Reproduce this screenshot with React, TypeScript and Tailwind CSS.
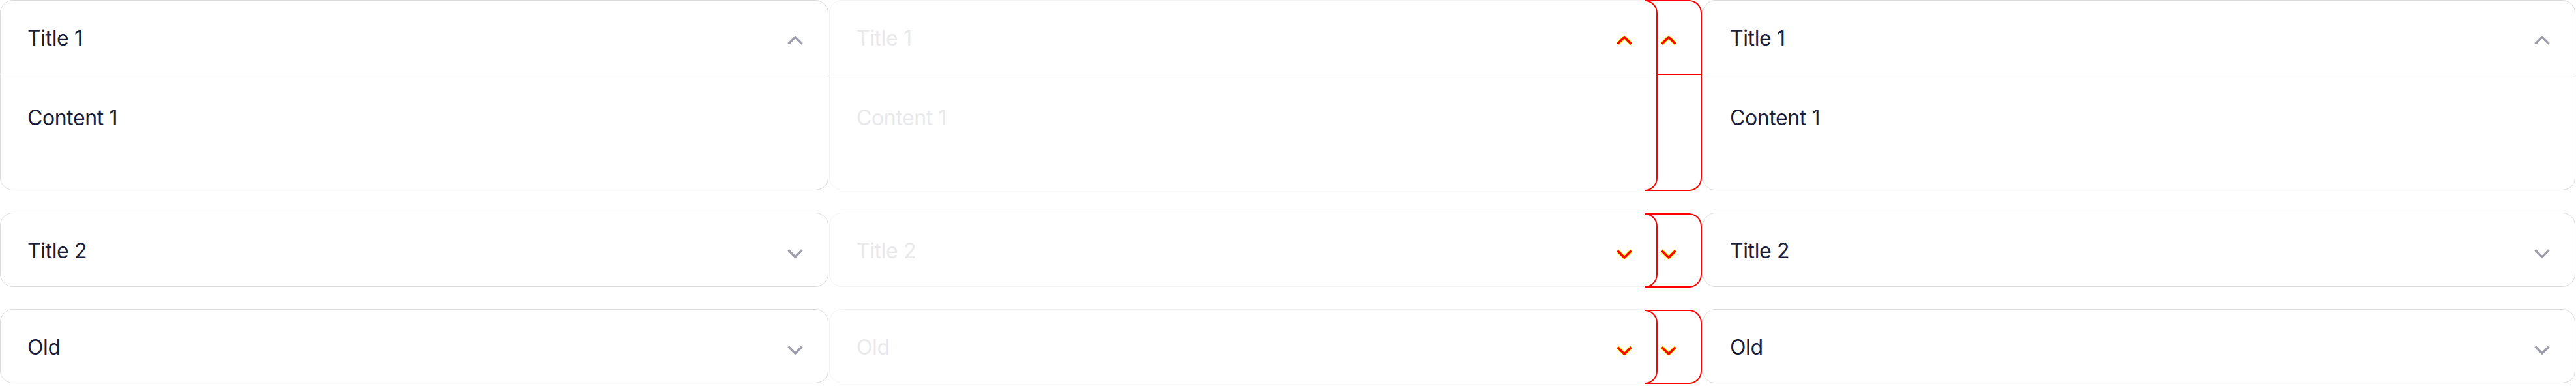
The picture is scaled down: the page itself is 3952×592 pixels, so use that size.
import React from "react";

function Chevron({ up, color, under }: { up: boolean; color: string; under?: string }) {
  const pts = up ? "2.5,12.5 13,2 23.5,12.5" : "2.5,2.5 13,13 23.5,2.5";
  return (
    <svg width="26" height="15" viewBox="0 0 26 15" className="shrink-0">
      {under ? <polyline points={pts} fill="none" stroke={under} strokeWidth={5.5} /> : null}
      <polyline points={pts} fill="none" stroke={color} strokeWidth={3.5} />
    </svg>
  );
}

type CardProps = { title: string; content?: string; open?: boolean; wide?: boolean; faded?: boolean };

function Card({ title, content, open, wide, faded }: CardProps) {
  const text = faded ? "text-[#e9e9ec]" : "text-[#1b1f3b]";
  const border = faded ? "border-[#f2f2f3]" : "border-[#dadade]";
  const width = wide ? "w-[1339px]" : "w-[1271px]";
  return (
    <div className={`${width} shrink-0 rounded-[20px] border ${border} bg-white`}>
      <div
        className={
          open
            ? `flex h-[113px] items-center justify-between border-b ${border} pl-[41px] pr-[37px]`
            : "flex h-[112px] items-center justify-between pl-[41px] pr-[37px]"
        }
      >
        <span className={`mt-[4px] text-[32px] leading-none tracking-[-0.4px] ${text}`}>{title}</span>
        {faded ? <span /> : <div className="mt-[10px]"><Chevron up={!!open} color="#9d9dab" /></div>}
      </div>
      {open ? (
        <div className="h-[177px] pl-[41px] pt-[51px]">
          <span className={`text-[32px] leading-none tracking-[-0.4px] ${text}`}>{content}</span>
        </div>
      ) : null}
    </div>
  );
}

function Panel({ wide, faded }: { wide?: boolean; faded?: boolean }) {
  return (
    <div className="flex flex-col gap-[34px]">
      <Card title="Title 1" content="Content 1" open wide={wide} faded={faded} />
      <Card title="Title 2" wide={wide} faded={faded} />
      <Card title="Old" wide={wide} faded={faded} />
    </div>
  );
}

const RED = "#ff0000";
const YEL = "#ffff00";

function DiffMarks({ open, up }: { open?: boolean; up: boolean }) {
  return (
    <div className={open ? "relative h-[293px]" : "relative h-[114px]"}>
      <div className="absolute inset-y-0 left-[1251px] w-[20px] rounded-r-[20px] border-2 border-l-0 border-[#ff0000]" />
      <div className="absolute inset-y-0 left-[1251px] w-[88px] rounded-r-[20px] border-2 border-l-0 border-[#ff0000]" />
      {open ? <div className="absolute left-[1271px] top-[113px] h-[2px] w-[68px] bg-[#ff0000]" /> : null}
      <div className="absolute left-[1207px] top-[55px]"><Chevron up={up} color={RED} under={YEL} /></div>
      <div className="absolute left-[1275px] top-[55px]"><Chevron up={up} color={RED} under={YEL} /></div>
    </div>
  );
}

export default function App() {
  return (
    <div className="flex h-[592px] w-[3952px] bg-white font-['Inter',sans-serif]">
      <div className="w-[1272px] shrink-0">
        <Panel />
      </div>
      <div className="relative w-[1340px] shrink-0">
        <Panel faded />
        <div className="absolute inset-0 flex flex-col gap-[34px]">
          <DiffMarks open up />
          <DiffMarks up={false} />
          <DiffMarks up={false} />
        </div>
      </div>
      <div className="w-[1340px] shrink-0">
        <Panel wide />
      </div>
    </div>
  );
}
